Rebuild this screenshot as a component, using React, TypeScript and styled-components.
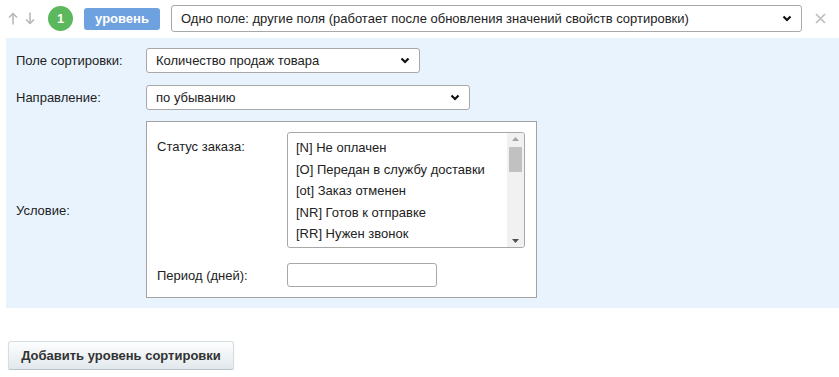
import styled, { createGlobalStyle } from "styled-components";

const Global = createGlobalStyle`
body{
    margin:0;
    background:#fff;
    font-family:"Liberation Sans", Arial, sans-serif;
    font-size:13px;
    color:#222;
}
`;

const Page = styled.div`
padding: 5px 0 0 6px;
width: 833px;
`;

const Header = styled.div`
display:flex;
align-items:center;
height:27px;
padding-left:2px;
margin-bottom:6px;
`;

const Arrows = styled.div`
display:flex;
gap:7px;
width:29px;
color:#b5b5b5;
svg{
    display:block;
}
`;

const Num = styled.div`
width:25px;
height:25px;
border-radius:50%;
background:#5cb85c;
color:#fff;
font-weight:bold;
font-size:13px;
display:flex;
align-items:center;
justify-content:center;
margin-left:11px;
`;

const Badge = styled.div`
margin-left:11px;
width:76px;
height:22px;
border-radius:3px;
background:#6ea1e0;
color:#fff;
font-weight:bold;
display:flex;
align-items:center;
justify-content:center;
`;

const Select = styled.div<{ $w: number; $h?: number; $ml?: number }>`
box-sizing:border-box;
width:${(p) => p.$w}px;
height:${(p) => p.$h ?? 25}px;
margin-left:${(p) => p.$ml ?? 0}px;
border:1px solid #a8a8a8;
border-radius:3px;
background:#fff;
display:flex;
align-items:center;
justify-content:space-between;
padding:0 9px 0 9px;
white-space:nowrap;
svg{
    flex:none;
}
`;

const Close = styled.div`
margin-left:13px;
color:#bbb;
display:flex;
`;

const Panel = styled.div`
background:#e8f3fe;
padding:10px 0 10px 10px;
display:flex;
flex-direction:column;
gap:12px;
`;

const Row = styled.div`
display:flex;
align-items:center;
`;

const Label = styled.div<{ $pt?: number }>`
width:130px;
flex:none;
padding-top:${(p) => p.$pt ?? 0}px;
`;

const CondBox = styled.div`
box-sizing:border-box;
width:391px;
border:1px solid #a3a3a3;
background:#fff;
padding:10px 11px 10px 10px;
display:flex;
flex-direction:column;
gap:15px;
margin-top:-1px;
`;

const SubRow = styled.div<{ $top?: boolean }>`
display:flex;
align-items:${(p) => (p.$top ? "flex-start" : "center")};
`;

const ListBox = styled.div`
box-sizing:border-box;
width:238px;
height:116px;
border:1px solid #a8a8a8;
border-radius:3px;
display:flex;
overflow:hidden;
`;

const Options = styled.div`
flex:1;
padding:4px 0 0 8px;
line-height:21.5px;
`;

const Scroll = styled.div`
width:17px;
background:#f1f1f1;
display:flex;
flex-direction:column;
align-items:center;
justify-content:space-between;
padding:4px 0 4px;
box-sizing:border-box;
`;

const Thumb = styled.div`
width:13px;
height:25px;
background:#c1c1c1;
margin-top:6px;
`;

const Spacer = styled.div`
flex:1;
`;

const Input = styled.div`
box-sizing:border-box;
width:150px;
height:24px;
border:1px solid #a8a8a8;
border-radius:3px;
`;

const AddButton = styled.button`
margin:33px 0 0 2px;
width:226px;
height:29px;
border:1px solid #d6dde2;
border-bottom-color:#b9c3ca;
border-radius:3px;
background:linear-gradient(#fdfefe, #e1e8ec);
box-shadow:0 1px 1px rgba(0,0,0,0.15);
font-family:"Liberation Sans", Arial, sans-serif;
font-size:13px;
font-weight:bold;
color:#333;
padding:0;
`;

const Chevron = () => (
  <svg width="10" height="7" viewBox="0 0 10 7">
    <polyline points="1.5,1.5 5,5 8.5,1.5" fill="none" stroke="#111" strokeWidth="2.2" />
  </svg>
);

const Arrow = ({ up }: { up?: boolean }) => (
  <svg width="10" height="13" viewBox="0 0 10 13" style={{ transform: up ? "none" : "rotate(180deg)" }}>
    <line x1="5" y1="1.5" x2="5" y2="12.5" stroke="currentColor" strokeWidth="1.5" />
    <polyline points="1,5.5 5,1.5 9,5.5" fill="none" stroke="currentColor" strokeWidth="1.5" />
  </svg>
);

const statuses = [
  "[N] Не оплачен",
  "[O] Передан в службу доставки",
  "[ot] Заказ отменен",
  "[NR] Готов к отправке",
  "[RR] Нужен звонок",
];

function App() {
  return (
    <Page>
      <Global />
      <Header>
        <Arrows>
          <Arrow up />
          <Arrow />
        </Arrows>
        <Num>1</Num>
        <Badge>уровень</Badge>
        <Select $w={631} $h={27} $ml={11}>
          <span>Одно поле: другие поля (работает после обновления значений свойств сортировки)</span>
          <Chevron />
        </Select>
        <Close>
          <svg width="11" height="11" viewBox="0 0 11 11">
            <path d="M1 1L10 10M10 1L1 10" stroke="currentColor" strokeWidth="1.6" />
          </svg>
        </Close>
      </Header>
      <Panel>
        <Row>
          <Label>Поле сортировки:</Label>
          <Select $w={274}>
            <span>Количество продаж товара</span>
            <Chevron />
          </Select>
        </Row>
        <Row>
          <Label>Направление:</Label>
          <Select $w={324}>
            <span>по убыванию</span>
            <Chevron />
          </Select>
        </Row>
        <Row>
          <Label>Условие:</Label>
          <CondBox>
            <SubRow $top>
              <Label $pt={7}>Статус заказа:</Label>
              <ListBox>
                <Options>
                  {statuses.map((s) => (
                    <div key={s}>{s}</div>
                  ))}
                </Options>
                <Scroll>
                  <svg width="7" height="4" viewBox="0 0 7 4">
                    <polygon points="0,4 3.5,0 7,4" fill="#a3a3a3" />
                  </svg>
                  <Thumb />
                  <Spacer />
                  <svg width="7" height="4" viewBox="0 0 7 4">
                    <polygon points="0,0 3.5,4 7,0" fill="#505050" />
                  </svg>
                </Scroll>
              </ListBox>
            </SubRow>
            <SubRow>
              <Label>Период (дней):</Label>
              <Input />
            </SubRow>
          </CondBox>
        </Row>
      </Panel>
      <AddButton>Добавить уровень сортировки</AddButton>
    </Page>
  );
}

export default App;
